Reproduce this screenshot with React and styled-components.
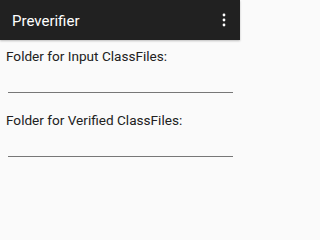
import React from "react";
import styled, { createGlobalStyle } from "styled-components";

const GlobalStyle = createGlobalStyle`
  html, body {
    margin: 0;
    padding: 0;
    background: #fafafa;
  }
  body {
    font-family: Roboto, "Noto Sans", Arial, sans-serif;
  }
`;

const Screen = styled.div`
  width: 240px;
  height: 225px;
  background: #fafafa;
  display: flex;
  flex-direction: column;
`;

const AppBar = styled.header`
  height: 40px;
  background: #212121;
  display: flex;
  align-items: center;
  justify-content: space-between;
  padding: 0 8px 0 12px;
  box-shadow: 0 1px 2px rgba(0, 0, 0, 0.25);
`;

const Title = styled.h1`
  margin: 0;
  color: #ffffff;
  font-size: 15px;
  font-weight: 400;
  line-height: 20px;
  padding-top: 1px;
`;

const MenuButton = styled.button`
  width: 16px;
  height: 24px;
  padding: 0;
  border: none;
  background: transparent;
  display: flex;
  align-items: center;
  justify-content: center;
`;

const Content = styled.main`
  display: flex;
  flex-direction: column;
  gap: 19px;
  padding: 8px 6px 0;
`;

const Field = styled.div`
  display: flex;
  flex-direction: column;
`;

const Label = styled.label`
  color: #212121;
  font-size: 13.6px;
  line-height: 16px;
`;

const Input = styled.input`
  height: 28px;
  margin: 0 1px 0 2px;
  padding: 0;
  border: none;
  border-bottom: 1px solid #777777;
  background: transparent;
  font: inherit;
  outline: none;
`;

const OverflowIcon = () => (
  <svg width="4" height="14" viewBox="0 0 4 14">
    <circle cx="2" cy="2" r="1.4" fill="#fff" />
    <circle cx="2" cy="7" r="1.4" fill="#fff" />
    <circle cx="2" cy="12" r="1.4" fill="#fff" />
  </svg>
);

export default function App() {
  return (
    <>
      <GlobalStyle />
      <Screen>
        <AppBar>
          <Title>Preverifier</Title>
          <MenuButton aria-label="More options">
            <OverflowIcon />
          </MenuButton>
        </AppBar>
        <Content>
          <Field>
            <Label>Folder for Input ClassFiles:</Label>
            <Input type="text" />
          </Field>
          <Field>
            <Label>Folder for Verified ClassFiles:</Label>
            <Input type="text" />
          </Field>
        </Content>
      </Screen>
    </>
  );
}
